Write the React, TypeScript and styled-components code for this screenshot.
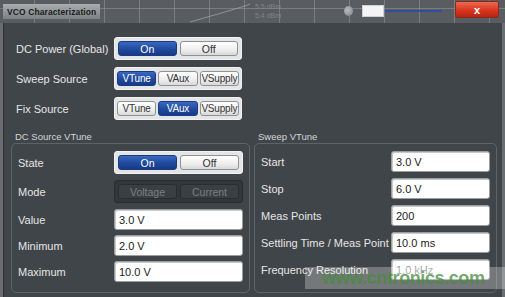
import React from "react";
import styled, { createGlobalStyle } from "styled-components";

const GlobalStyle = createGlobalStyle`
  html, body {
    margin: 0;
    padding: 0;
    background: #5a5e62;
    font-family: "Liberation Sans", Arial, sans-serif;
  }
`;

const Screen = styled.div`
  position: relative;
  width: 505px;
  height: 297px;
  overflow: hidden;
  display: flex;
  flex-direction: column;
  background: #6a6e72;
`;

const ChartStrip = styled.div`
  position: relative;
  height: 23px;
  display: flex;
  align-items: center;
  padding-left: 3px;
  background-color: #595d61;
  background-image: repeating-linear-gradient(
      90deg,
      transparent 0 34px,
      rgba(160, 165, 170, 0.45) 34px 35px
    ),
    linear-gradient(
      180deg,
      transparent 0 8px,
      rgba(160, 165, 170, 0.45) 8px 9px,
      transparent 9px
    );
`;

const TitleTab = styled.div`
  height: 15px;
  padding: 0 4px;
  display: flex;
  align-items: center;
  font-size: 8.5px;
  font-weight: bold;
  color: #1c1c1c;
  letter-spacing: 0.1px;
  background: linear-gradient(180deg, #a9adb0, #7d8185);
`;

const Trace = styled.svg`
  position: absolute;
  left: 185px;
  top: 0;
`;

const FaintText = styled.div`
  position: absolute;
  left: 255px;
  top: 2px;
  font-size: 7px;
  line-height: 9px;
  color: #80858a;
`;

const Knob = styled.div`
  position: absolute;
  left: 344px;
  top: 6px;
  width: 9px;
  height: 10px;
  border-radius: 50%;
  background: radial-gradient(circle at 40% 40%, #b8bcc0, #7d8185);
`;

const SliderBox = styled.div`
  position: absolute;
  left: 362px;
  top: 5px;
  width: 22px;
  height: 12px;
  background: #f4f4f4;
  border: 1px solid #cfd2d4;
  box-sizing: border-box;
`;

const SliderLine = styled.div`
  position: absolute;
  left: 385px;
  top: 10px;
  width: 57px;
  height: 2px;
  background: #2f4fa0;
`;

const CloseButton = styled.div`
  position: absolute;
  left: 455px;
  top: 1px;
  width: 44px;
  height: 17px;
  border-radius: 2px;
  display: flex;
  align-items: center;
  justify-content: center;
  color: #fff;
  font-size: 11px;
  font-weight: bold;
  background: linear-gradient(180deg, #ec6a50 0%, #d9361f 55%, #b72414 100%);
  border: 1px solid #8a2a1e;
  box-sizing: border-box;
`;

const Dialog = styled.div`
  flex: 1;
  margin: 0 3px 0 3px;
  background: #404549;
  border-left: 1px solid #2e3236;
  padding: 14px 6px 0 7px;
  display: flex;
  flex-direction: column;
`;

const TopRows = styled.div`
  display: flex;
  flex-direction: column;
  gap: 7px;
  padding-left: 5px;
`;

const Row = styled.div<{ $labelWidth: number; $h?: number }>`
  display: flex;
  align-items: center;
  height: ${(p) => p.$h ?? 23}px;

  & > span {
    width: ${(p) => p.$labelWidth}px;
    flex: none;
    font-size: 11px;
    color: #e6e6e6;
    white-space: nowrap;
  }
`;

const Segment = styled.div<{ $dark?: boolean; $w: number; $tight?: boolean }>`
  width: ${(p) => p.$w}px;
  height: 23px;
  box-sizing: border-box;
  padding: ${(p) => (p.$tight ? "3px 2px" : "3px")};
  gap: ${(p) => (p.$tight ? 2 : 3)}px;
  display: flex;
  border-radius: 3px;
  background: ${(p) => (p.$dark ? "#33373b" : "#e4e5e6")};
  border: 1px solid ${(p) => (p.$dark ? "#2a2d30" : "#f2f2f2")};
`;

const SegButton = styled.div<{ $active?: boolean; $dark?: boolean; $tight?: boolean }>`
  flex: 1;
  min-width: 0;
  display: flex;
  align-items: center;
  justify-content: center;
  border-radius: 3px;
  font-size: ${(p) => (p.$tight ? 10 : 10.5)}px;
  letter-spacing: ${(p) => (p.$tight ? "-0.2px" : "0")};
  box-sizing: border-box;
  white-space: nowrap;
  overflow: hidden;
  color: ${(p) => (p.$dark ? "#7a7f83" : p.$active ? "#ffffff" : "#333")};
  border: 1px solid
    ${(p) => (p.$dark ? "#2a2d30" : p.$active ? "#1c3a80" : "#8f9295")};
  background: ${(p) =>
    p.$dark
      ? "#3a3f43"
      : p.$active
      ? "linear-gradient(180deg, #3a68c0 0%, #1f4a9e 55%, #173a85 100%)"
      : "linear-gradient(180deg, #ffffff 0%, #eeeeee 60%, #d8d8d8 100%)"};
`;

const Groups = styled.div`
  margin-top: 11px;
  display: flex;
  gap: 4px;
`;

const Group = styled.div<{ $w: number }>`
  width: ${(p) => p.$w}px;
  display: flex;
  flex-direction: column;
`;

const GroupTitle = styled.div`
  height: 12px;
  padding-left: 4px;
  font-size: 9.5px;
  line-height: 12px;
  color: #d4d6d8;
`;

const GroupBox = styled.div<{ $gap: number }>`
  height: 150px;
  box-sizing: border-box;
  border: 1px solid #5e6368;
  border-radius: 5px;
  padding: 7px 6px 0 6px;
  display: flex;
  flex-direction: column;
  gap: ${(p) => p.$gap}px;
`;

const Field = styled.div<{ $w: number; $disabled?: boolean }>`
  width: ${(p) => p.$w}px;
  height: 21px;
  box-sizing: border-box;
  border-radius: 3px;
  border: 1px solid #9a9da0;
  box-shadow: inset 1px 1px 0 #c7c9cb;
  background: #ffffff;
  display: flex;
  align-items: center;
  padding-left: 4px;
  font-size: 11px;
  color: ${(p) => (p.$disabled ? "#8a8d90" : "#1a1a1a")};
`;

const Watermark = styled.div`
  position: absolute;
  left: 305px;
  top: 267px;
  width: 200px;
  height: 22px;
  background: rgba(255, 255, 255, 0.28);
  display: flex;
  align-items: center;
  padding-left: 17px;
  box-sizing: border-box;
  font-size: 18px;
  font-weight: bold;
  color: rgba(70, 140, 60, 0.75);
  letter-spacing: -0.4px;
  white-space: nowrap;
`;

type Opt = { label: string; active?: boolean };

function Toggle({ opts, w, dark }: { opts: Opt[]; w: number; dark?: boolean }) {
  const tight = opts.length > 2;
  return (
    <Segment $w={w} $dark={dark} $tight={tight}>
      {opts.map((o) => (
        <SegButton key={o.label} $active={o.active} $dark={dark} $tight={tight}>
          {o.label}
        </SegButton>
      ))}
    </Segment>
  );
}

const sweepFields = [
  { label: "Start", value: "3.0 V" },
  { label: "Stop", value: "6.0 V" },
  { label: "Meas Points", value: "200" },
  { label: "Settling Time / Meas Point", value: "10.0 ms" },
  { label: "Frequency Resolution", value: "1.0 kHz", disabled: true },
];

export default function App() {
  return (
    <>
      <GlobalStyle />
      <Screen>
        <ChartStrip>
          <TitleTab>VCO Characterization</TitleTab>
          <Trace width="70" height="23">
            <polyline points="5,22 40,12 60,6 65,4" fill="none" stroke="#9aa0a4" strokeWidth="0.8" />
          </Trace>
          <FaintText>
            5.5 dBm
            <br />
            5.4 dBm
          </FaintText>
          <Knob />
          <SliderBox />
          <SliderLine />
          <CloseButton>x</CloseButton>
        </ChartStrip>
        <Dialog>
          <TopRows>
            <Row $labelWidth={98}>
              <span>DC Power (Global)</span>
              <Toggle w={128} opts={[{ label: "On", active: true }, { label: "Off" }]} />
            </Row>
            <Row $labelWidth={98}>
              <span>Sweep Source</span>
              <Toggle
                w={128}
                opts={[{ label: "VTune", active: true }, { label: "VAux" }, { label: "VSupply" }]}
              />
            </Row>
            <Row $labelWidth={98}>
              <span>Fix Source</span>
              <Toggle
                w={128}
                opts={[{ label: "VTune" }, { label: "VAux", active: true }, { label: "VSupply" }]}
              />
            </Row>
          </TopRows>
          <Groups>
            <Group $w={239}>
              <GroupTitle>DC Source VTune</GroupTitle>
              <GroupBox $gap={5}>
                <Row $labelWidth={96}>
                  <span>State</span>
                  <Toggle w={129} opts={[{ label: "On", active: true }, { label: "Off" }]} />
                </Row>
                <Row $labelWidth={96} $h={25}>
                  <span>Mode</span>
                  <Toggle w={129} dark opts={[{ label: "Voltage" }, { label: "Current" }]} />
                </Row>
                <Row $labelWidth={96} $h={21}>
                  <span>Value</span>
                  <Field $w={129}>3.0 V</Field>
                </Row>
                <Row $labelWidth={96} $h={21}>
                  <span>Minimum</span>
                  <Field $w={129}>2.0 V</Field>
                </Row>
                <Row $labelWidth={96} $h={21}>
                  <span>Maximum</span>
                  <Field $w={129}>10.0 V</Field>
                </Row>
              </GroupBox>
            </Group>
            <Group $w={243}>
              <GroupTitle>Sweep VTune</GroupTitle>
              <GroupBox $gap={6}>
                {sweepFields.map((f) => (
                  <Row key={f.label} $labelWidth={130} $h={21}>
                    <span>{f.label}</span>
                    <Field $w={99} $disabled={f.disabled}>
                      {f.value}
                    </Field>
                  </Row>
                ))}
              </GroupBox>
            </Group>
          </Groups>
        </Dialog>
        <Watermark>www.cntronics.com</Watermark>
      </Screen>
    </>
  );
}
